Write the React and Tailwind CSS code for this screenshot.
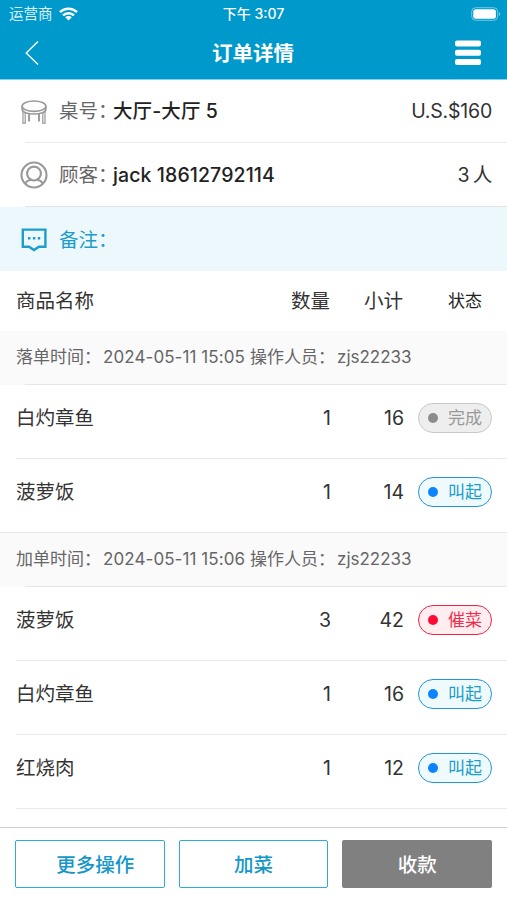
import React from 'react';
import clsx from 'clsx';

const orderGroups = [
  {
    label: '落单时间：',
    time: '2024-05-11 15:05',
    operator: 'zjs22233',
    items: [
      { name: '白灼章鱼', count: 1, subtotal: 16, status: 'done' },
      { name: '菠萝饭', count: 1, subtotal: 14, status: 'call' }
    ]
  },
  {
    label: '加单时间：',
    time: '2024-05-11 15:06',
    operator: 'zjs22233',
    items: [
      { name: '菠萝饭', count: 3, subtotal: 42, status: 'urge' },
      { name: '白灼章鱼', count: 1, subtotal: 16, status: 'call' },
      { name: '红烧肉', count: 1, subtotal: 12, status: 'call' }
    ]
  }
];

const statuses = {
  done: { text: '完成', pill: 'border-[#c8c8c8] bg-[#eeeeee] text-[#999999]', dot: 'bg-[#8c8c8c]' },
  call: { text: '叫起', pill: 'border-[#2494d8] bg-[#effafd] text-[#1c9dcb]', dot: 'bg-[#0a84ff]' },
  urge: { text: '催菜', pill: 'border-[#ee2446] bg-[#ffedf0] text-[#ee2c4b]', dot: 'bg-[#ff0a37]' }
};

function StatusBar() {
  return (
    <div className="grid h-7 grid-cols-3 items-center text-sm text-white">
      <div className="flex items-center gap-[6px] pl-[9px]">
        <span className="text-[14.5px] text-white/85">运营商</span>
        <svg width="19" height="14" viewBox="0 0 19 14" fill="none" stroke="currentColor" strokeWidth="2.5">
          <path d="M1 5.2a12 12 0 0 1 17 0" />
          <path d="M4 8.4a7.8 7.8 0 0 1 11 0" />
          <path d="M9.5 13.6 6.2 10.3a4.7 4.7 0 0 1 6.6 0z" fill="currentColor" stroke="none" />
        </svg>
      </div>
      <span className="text-center font-medium">下午 3:07</span>
      <div className="flex justify-end pr-[6px]">
        <svg width="30" height="14" viewBox="0 0 30 14" fill="none">
          <rect x="0.7" y="0.7" width="26" height="12.6" rx="4" stroke="white" strokeOpacity="0.45" />
          <rect x="2.3" y="2.3" width="22.6" height="9.4" rx="2.5" fill="white" />
          <path d="M28 5v4c1.6-.6 1.6-3.4 0-4z" fill="white" fillOpacity="0.5" />
        </svg>
      </div>
    </div>
  );
}

function Header() {
  return (
    <header className="h-20 border-b border-[#7fd5ee] bg-[#0099cc] text-white">
      <StatusBar />
      <div className="flex h-[50px] items-center justify-between pr-[26px] pl-[25px]">
        <svg width="26" height="26" viewBox="0 0 26 26" fill="none" stroke="currentColor" strokeWidth="1.4">
          <path d="M13 1.5 1.2 13 13 24.5" />
        </svg>
        <h1 className="pt-0.5 text-[20.5px] font-bold">订单详情</h1>
        <svg width="26" height="26" viewBox="0 0 26 26" fill="currentColor">
          <rect y="0.5" width="26" height="6" rx="2" />
          <rect y="9.7" width="26" height="6" rx="2" />
          <rect y="18.9" width="26" height="6" rx="2" />
        </svg>
      </div>
    </header>
  );
}

function TableIcon() {
  return (
    <svg className="ml-px" width="26" height="24" viewBox="0 0 26 24" fill="none" stroke="#999999" strokeWidth="1.6">
      <ellipse cx="13" cy="6.2" rx="11.9" ry="5.2" />
      <path d="M1.1 6.2v3c0 2.9 5.3 4.8 11.9 4.8s11.9-1.9 11.9-4.8v-3" />
      <path d="M2 11v12.2M4.2 12.5v10.7M1.3 23.2h3.6M24 11v12.2M21.8 12.5v10.7M21.1 23.2h3.6" strokeWidth="1.2" />
      <path d="M8 13.6v7.9M18 13.6v7.9" strokeWidth="1.9" />
    </svg>
  );
}

function CustomerIcon() {
  return (
    <svg width="28" height="28" viewBox="0 0 28 28" fill="none" stroke="#999999" strokeWidth="2.1">
      <circle cx="14" cy="14" r="12.5" />
      <path d="M5.3 22.6c1-2.3 2.9-3.5 5.7-3.9a6.9 6.9 0 1 1 6 0c2.8.4 4.7 1.6 5.7 3.9M11 18.7c1.8 1 4.2 1 6 0" />
    </svg>
  );
}

function NoteIcon() {
  return (
    <svg width="26" height="24" viewBox="0 0 26 24" fill="none" stroke="#1c9dcb" strokeWidth="2.4">
      <path d="M1.8 1.6h22.6v17.2H18L13 22.1l-5-3.3H1.8z" />
      <path d="M7 10.2h2.4M11.9 10.2h2.4M16.8 10.2h2.4" />
    </svg>
  );
}

function InfoRow({ icon, label, value, extra, className }) {
  return (
    <div className={clsx('flex pl-5', className)}>
      <div className="flex w-[39px] shrink-0 items-center">{icon}</div>
      <div className="flex grow items-center pt-px pr-[15px]">
        <span className="w-[54px] shrink-0 whitespace-nowrap text-[#666666]">{label}</span>
        <span className="font-medium tracking-[0.1px] text-[#222222]">{value}</span>
        <span className="ml-auto tracking-[-0.2px] [word-spacing:-2px]">{extra}</span>
      </div>
    </div>
  );
}

function StatusPill({ status }) {
  const { text, pill, dot } = statuses[status];

  return (
    <span className={clsx('flex h-[30px] w-[74px] items-center rounded-full border pl-[9px] text-[17px]', pill)}>
      <span className={clsx('mr-[10px] size-[10px] rounded-full', dot)} />
      <span className="pt-0.5">{text}</span>
    </span>
  );
}

function OrderItem({ item, last }) {
  return (
    <div>
      <div className="flex h-[73px] items-center pr-[15px] pb-2 pl-4">
        <span className="grow pt-0.5">{item.name}</span>
        <span className="w-16 pt-0.5 text-right">{item.count}</span>
        <span className="w-[73px] pt-0.5 text-right">{item.subtotal}</span>
        <span className="ml-[14px]">
          <StatusPill status={item.status} />
        </span>
      </div>
      <div className={clsx('h-px bg-[#e9e9e9]', last ? 'ml-0' : 'ml-4')} />
    </div>
  );
}

function OrderGroup({ group, isLast }) {
  return (
    <section>
      <div className="bg-[#fafafa]">
        <div className="flex h-[53px] items-center pt-px pl-4 text-[17px] text-[#666666]">
          <span className="w-[87px] whitespace-nowrap">{group.label}</span>
          <span className="w-[147px] whitespace-nowrap tracking-[0.08px]">{group.time}</span>
          <span className="w-[87px] whitespace-nowrap">操作人员：</span>
          <span>{group.operator}</span>
        </div>
        <div className="ml-[25px] h-px bg-[#e6e6e6]" />
      </div>
      {group.items.map((item, index) => (
        <OrderItem
          key={item.name}
          item={item}
          last={!isLast && index === group.items.length - 1}
        />
      ))}
    </section>
  );
}

function App() {
  return (
    <div className="flex h-[900px] w-full flex-col bg-white font-[Inter,'Noto_Sans_CJK_SC',sans-serif] text-[19.5px] text-[#333333]">
      <Header />

      <InfoRow className="h-[63px]" icon={<TableIcon />} label="桌号：" value="大厅-大厅 5" extra="U.S.$160" />
      <div className="-mt-px ml-[25px] h-px bg-[#eaeaea]" />
      <InfoRow className="h-16" icon={<CustomerIcon />} label="顾客：" value="jack 18612792114" extra="3 人" />
      <div className="-mt-px ml-[25px] h-px bg-[#e0e5e6]" />

      <div className="flex h-16 items-center bg-[#ecf8fb] pl-[21px] text-[#1c9dcb]">
        <span className="w-[38px] pt-0.5"><NoteIcon /></span>
        <span className="pt-[3px]">备注：</span>
      </div>

      <div className="flex h-[60px] items-center pt-px pr-[25px] pl-4">
        <span className="grow">商品名称</span>
        <span className="w-16 text-right">数量</span>
        <span className="w-[73px] text-right">小计</span>
        <span className="w-[79px] text-right text-[17px] text-[#222222]">状态</span>
      </div>

      <main className="grow">
        {orderGroups.map((group, index) => (
          <OrderGroup key={group.label} group={group} isLast={index === orderGroups.length - 1} />
        ))}
      </main>

      <footer className="grid h-[73px] grid-cols-3 gap-[14px] border-t border-[#d0d0d0] px-[15px] pt-3 font-medium">
        <button className="h-12 rounded-xs border border-[#2aaed4] pt-1 pl-[11px] text-[#1497c8]">更多操作</button>
        <button className="h-12 rounded-xs border border-[#2aaed4] pt-1 text-[#1497c8]">加菜</button>
        <button className="h-12 rounded-xs bg-[#808080] pt-1 text-white">收款</button>
      </footer>
    </div>
  );
}

export default App;
